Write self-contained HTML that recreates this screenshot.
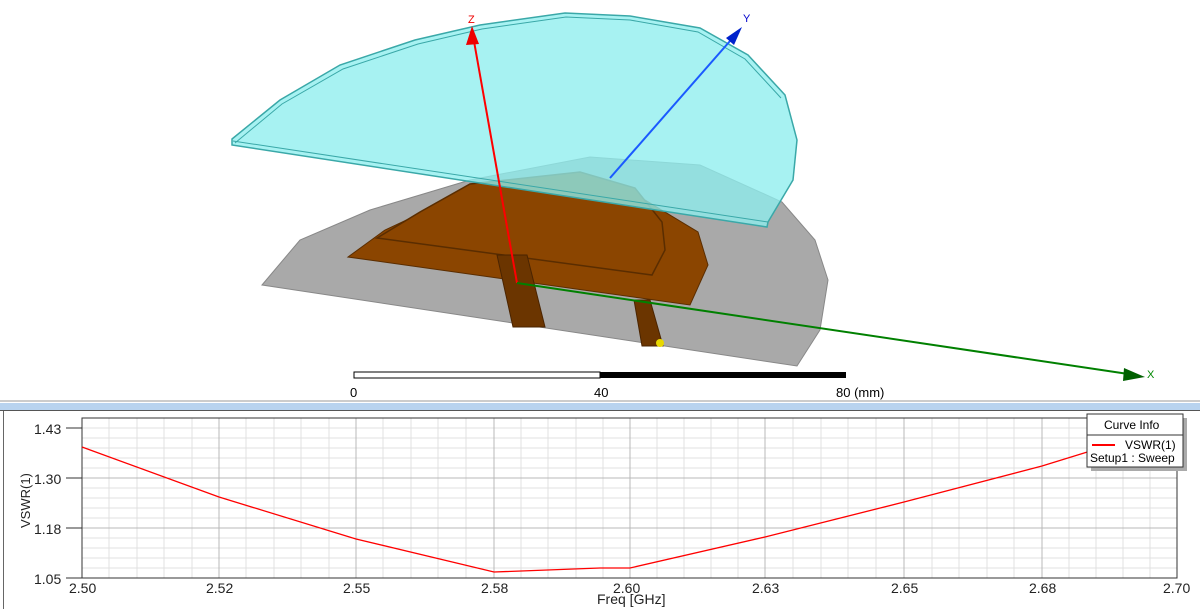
<!DOCTYPE html>
<html><head><meta charset="utf-8"><style>
body{margin:0;width:1200px;height:609px;overflow:hidden;background:#fff;font-family:"Liberation Sans",sans-serif;}
svg{position:absolute;left:0;top:0}
</style></head><body>
<svg width="1200" height="609" viewBox="0 0 1200 609">
<polygon points="262,285 300,240 370,210 470,180 590,157 700,165 782,202 815,240 828,280 820,330 797,366" fill="#a9a9a9" stroke="#888" stroke-width="1"/>
<polygon points="348,257 385,230 460,195 550,188 640,197 698,232 708,265 690,305" fill="#8b4500" stroke="#5a2d00" stroke-width="1"/>
<polygon points="377,238 420,212 470,184 580,172 635,188 662,222 665,250 652,275" fill="#8b4500" stroke="#5a2d00" stroke-width="1.5"/>
<polygon points="497,255 527,255 545,327 513,327" fill="#6b3500" stroke="#4a2400"/>
<polygon points="634,300 650,300 663,346 642,346" fill="#6b3500" stroke="#4a2400"/>
<ellipse cx="660" cy="343" rx="4" ry="4" fill="#e8d800"/>
<polygon points="232,139 280,100 340,65 415,40 480,25 565,13 630,16 700,28 748,55 785,95 797,140 793,180 768,222 767,227 232,145" fill="#8eeeee" fill-opacity="0.78" stroke="#3aa8a8" stroke-width="1.5"/>
<polyline points="235,143 282,104 343,69 418,44 482,29 566,17 630,20 698,32 745,59 781,98" fill="none" stroke="#3aa8a8" stroke-width="1"/>
<line x1="233" y1="141" x2="768" y2="222" stroke="#3aa8a8" stroke-width="1"/>
<line x1="517" y1="283" x2="472" y2="30" stroke="#f00" stroke-width="2"/>
<polygon points="466,45 472,26 479,44" fill="#e00"/>
<text x="468" y="23" font-size="11" fill="#e00">Z</text>
<line x1="610" y1="178" x2="737" y2="33" stroke="#1a5aff" stroke-width="2"/>
<polygon points="726,38 742,27 734,45" fill="#0022cc"/>
<text x="743" y="22" font-size="11" fill="#00c">Y</text>
<line x1="517" y1="283" x2="1135" y2="375" stroke="#008000" stroke-width="2"/>
<polygon points="1124,368 1145,377 1123,381" fill="#006000"/>
<text x="1147" y="378" font-size="11" fill="#080">X</text>
<rect x="354" y="372" width="246" height="6" fill="#fff" stroke="#000"/>
<rect x="600" y="372" width="246" height="6" fill="#000"/>
<text x="350" y="397" font-size="13">0</text>
<text x="594" y="397" font-size="13">40</text>
<text x="836" y="397" font-size="13">80 (mm)</text>
<rect x="0" y="400" width="1200" height="2" fill="#ccc"/>
<rect x="0" y="403" width="1200" height="8" fill="#b8d3ef"/>
<rect x="0" y="410" width="1200" height="1" fill="#555"/>
<rect x="3" y="411" width="1" height="198" fill="#666"/>
<g stroke="#e0e0e0" stroke-width="1">
<line x1="82" y1="428" x2="1177" y2="428"/><line x1="82" y1="438" x2="1177" y2="438"/><line x1="82" y1="448" x2="1177" y2="448"/><line x1="82" y1="458" x2="1177" y2="458"/><line x1="82" y1="468" x2="1177" y2="468"/>
<line x1="82" y1="488" x2="1177" y2="488"/><line x1="82" y1="498" x2="1177" y2="498"/><line x1="82" y1="508" x2="1177" y2="508"/><line x1="82" y1="518" x2="1177" y2="518"/>
<line x1="82" y1="538" x2="1177" y2="538"/><line x1="82" y1="548" x2="1177" y2="548"/><line x1="82" y1="558" x2="1177" y2="558"/><line x1="82" y1="568" x2="1177" y2="568"/>
<line x1="109" y1="418" x2="109" y2="578"/><line x1="137" y1="418" x2="137" y2="578"/><line x1="164" y1="418" x2="164" y2="578"/><line x1="192" y1="418" x2="192" y2="578"/>
<line x1="246" y1="418" x2="246" y2="578"/><line x1="274" y1="418" x2="274" y2="578"/><line x1="301" y1="418" x2="301" y2="578"/><line x1="329" y1="418" x2="329" y2="578"/>
<line x1="383" y1="418" x2="383" y2="578"/><line x1="411" y1="418" x2="411" y2="578"/><line x1="438" y1="418" x2="438" y2="578"/><line x1="466" y1="418" x2="466" y2="578"/>
<line x1="521" y1="418" x2="521" y2="578"/><line x1="548" y1="418" x2="548" y2="578"/><line x1="576" y1="418" x2="576" y2="578"/><line x1="603" y1="418" x2="603" y2="578"/>
<line x1="657" y1="418" x2="657" y2="578"/><line x1="684" y1="418" x2="684" y2="578"/><line x1="711" y1="418" x2="711" y2="578"/><line x1="738" y1="418" x2="738" y2="578"/>
<line x1="793" y1="418" x2="793" y2="578"/><line x1="821" y1="418" x2="821" y2="578"/><line x1="848" y1="418" x2="848" y2="578"/><line x1="876" y1="418" x2="876" y2="578"/>
<line x1="932" y1="418" x2="932" y2="578"/><line x1="959" y1="418" x2="959" y2="578"/><line x1="987" y1="418" x2="987" y2="578"/><line x1="1014" y1="418" x2="1014" y2="578"/>
<line x1="1069" y1="418" x2="1069" y2="578"/><line x1="1096" y1="418" x2="1096" y2="578"/><line x1="1123" y1="418" x2="1123" y2="578"/><line x1="1150" y1="418" x2="1150" y2="578"/>
</g>
<g stroke="#b8b8b8" stroke-width="1">
<line x1="82" y1="478" x2="1177" y2="478"/><line x1="82" y1="528" x2="1177" y2="528"/>
<line x1="219" y1="418" x2="219" y2="578"/><line x1="356" y1="418" x2="356" y2="578"/><line x1="494" y1="418" x2="494" y2="578"/><line x1="630" y1="418" x2="630" y2="578"/><line x1="765" y1="418" x2="765" y2="578"/><line x1="904" y1="418" x2="904" y2="578"/><line x1="1042" y1="418" x2="1042" y2="578"/>
</g>
<rect x="82" y="418" width="1095" height="160" fill="none" stroke="#333" stroke-width="1"/>
<line x1="66" y1="428" x2="82" y2="428" stroke="#333"/><line x1="66" y1="478" x2="82" y2="478" stroke="#333"/><line x1="66" y1="528" x2="82" y2="528" stroke="#333"/><line x1="66" y1="578" x2="82" y2="578" stroke="#333"/>
<polyline points="82,447 219,497 356,539 494,572 600,568 630,568 765,537 904,502 1042,466 1110,445 1177,428" fill="none" stroke="#f00" stroke-width="1.3"/>
<g font-size="14" fill="#222">
<text x="34" y="434">1.43</text><text x="34" y="484">1.30</text><text x="34" y="534">1.18</text><text x="34" y="584">1.05</text>
<text x="69" y="593">2.50</text><text x="206" y="593">2.52</text><text x="343" y="593">2.55</text><text x="481" y="593">2.58</text><text x="613" y="593">2.60</text><text x="752" y="593">2.63</text><text x="891" y="593">2.65</text><text x="1029" y="593">2.68</text><text x="1163" y="593">2.70</text>
<text x="597" y="604">Freq [GHz]</text>
<text transform="translate(30,528) rotate(-90)" font-size="13">VSWR(1)</text>
</g>
<rect x="1091" y="418" width="96" height="53" fill="#aaa"/>
<rect x="1087" y="414" width="96" height="53" fill="#fff" stroke="#333"/>
<line x1="1087" y1="435" x2="1183" y2="435" stroke="#333"/>
<text x="1104" y="429" font-size="12">Curve Info</text>
<line x1="1092" y1="445" x2="1115" y2="445" stroke="#f00" stroke-width="2"/>
<text x="1125" y="449" font-size="12">VSWR(1)</text>
<text x="1090" y="462" font-size="12">Setup1 : Sweep</text>
</svg>
</body></html>
